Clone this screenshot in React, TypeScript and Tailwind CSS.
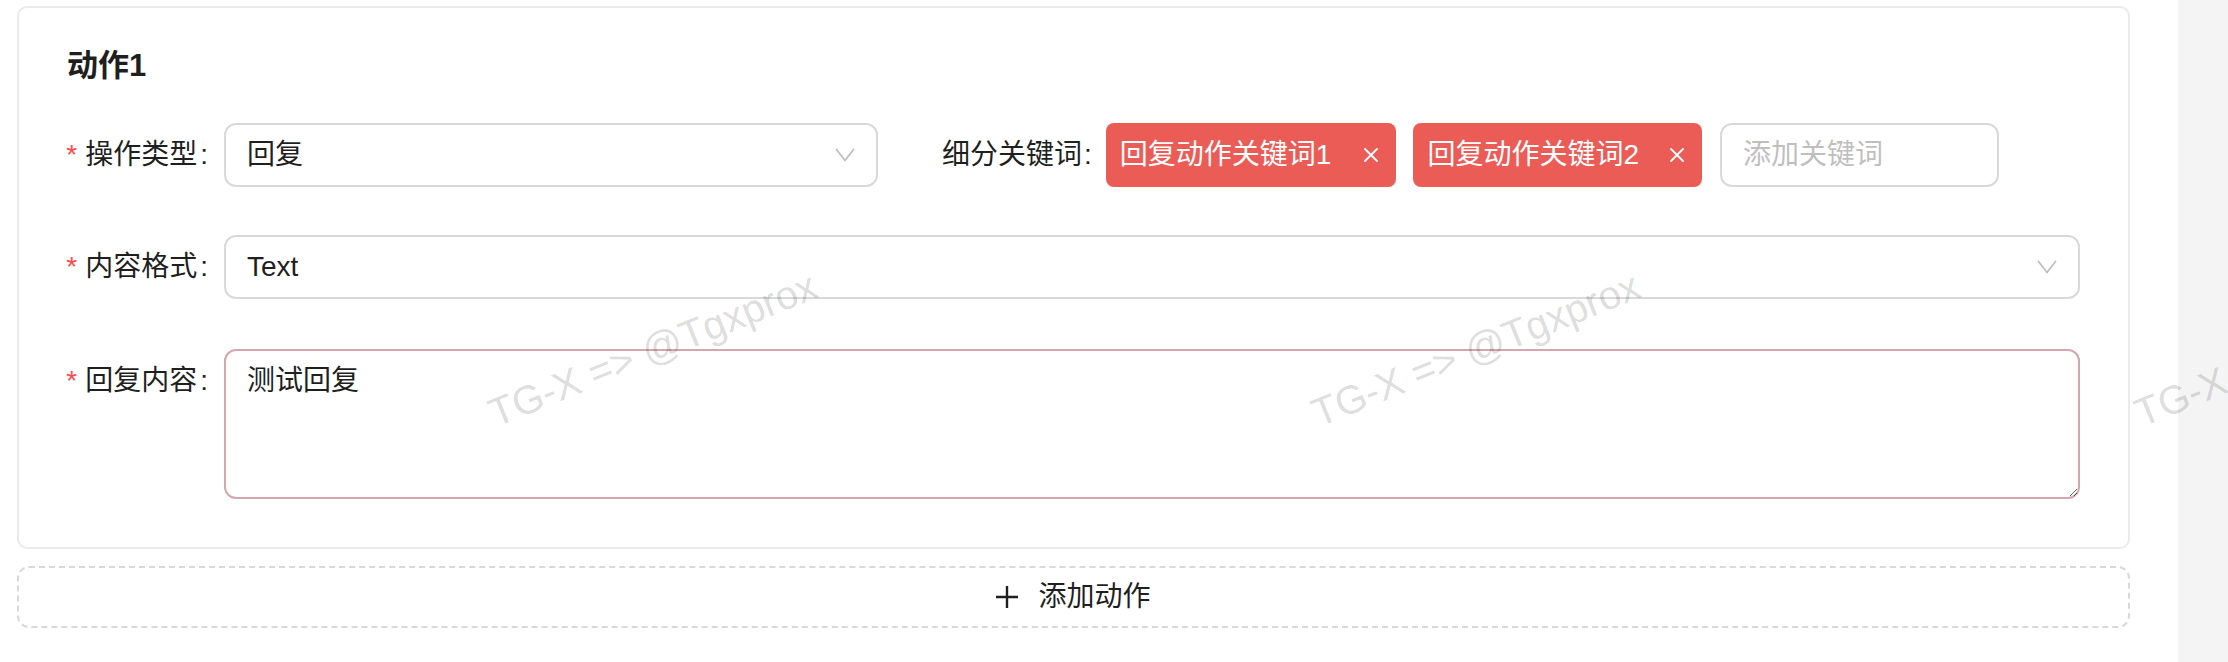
import React from "react";

const FONT = "font-['Liberation_Sans','Noto_Sans_CJK_SC',sans-serif]";

const Chevron = () => (
  <svg width="20" height="14" viewBox="0 0 20 14" fill="none" stroke="#bfbfbf" strokeWidth="1.8" strokeLinecap="round" strokeLinejoin="round">
    <polyline points="1.5,1.5 10,12.5 18.5,1.5" />
  </svg>
);

const CloseX = ({ gap }: { gap: string }) => (
  <svg className={`shrink-0 ${gap}`} width="16" height="16" viewBox="0 0 16 16" fill="none" stroke="#ffffff" strokeWidth="1.8" strokeLinecap="round">
    <path d="M2 2 L14 14 M14 2 L2 14" />
  </svg>
);

const Plus = () => (
  <svg width="22" height="22" viewBox="0 0 22 22" fill="none" stroke="#1f1f1f" strokeWidth="2.4">
    <path d="M11 0 V22 M0 11 H22" />
  </svg>
);

// 表单项左侧标签（右对齐，带必填星号）
const FieldLabel = ({ text }: { text: string }) => (
  <div className="w-[157px] shrink-0 h-[64px] flex items-center justify-end pr-[16px] whitespace-nowrap">
    <span className="text-[#ff4d4f] mr-[8px]">*</span>
    <span>{text}</span>
    <span className="ml-[3px]">:</span>
  </div>
);

const Tag = ({ text, gap }: { text: string; gap: string }) => (
  <div className="h-[64px] shrink-0 flex items-center pl-[14px] pr-[17px] rounded-[8px] bg-[#ec5c57] text-white whitespace-nowrap">
    <span>{text}</span>
    <CloseX gap={gap} />
  </div>
);

const Watermark = ({ className }: { className: string }) => (
  <span className={`absolute origin-bottom-left -rotate-[22deg] text-[40px] leading-[40px] text-black/15 whitespace-nowrap ${className}`}>
    TG-X =&gt; @Tgxprox
  </span>
);

export default function App() {
  return (
    <div className={`relative w-full h-[662px] flex bg-white text-[28px] text-[#1f1f1f] overflow-hidden ${FONT}`}>
      <div className="w-[2178px] shrink-0 pt-[6px] pl-[17px] pr-[48px]">
        <div className="border-2 border-[#ebebeb] rounded-[10px] bg-white px-[48px] pt-[38px] pb-[48px]">
          <div className="text-[31px] font-semibold leading-[40px] mb-[37px]">动作1</div>

          <div className="flex items-center">
            <FieldLabel text="操作类型" />
            <div className="w-[654px] shrink-0 h-[64px] border-2 border-[#d9d9d9] rounded-[12px] px-[21px] flex items-center justify-between">
              <span>回复</span>
              <Chevron />
            </div>
            <div className="ml-[64px] flex items-center whitespace-nowrap">
              <span>细分关键词</span>
              <span className="ml-[2px] mr-[14px]">:</span>
            </div>
            <div className="flex items-center">
              <Tag text="回复动作关键词1" gap="ml-[32px]" />
              <div className="ml-[17px]">
                <Tag text="回复动作关键词2" gap="ml-[30px]" />
              </div>
              <input
                className="ml-[18px] w-[279px] h-[64px] border-2 border-[#d9d9d9] rounded-[12px] px-[21px] outline-none placeholder:text-[#bfbfbf]"
                placeholder="添加关键词"
              />
            </div>
          </div>

          <div className="flex items-center mt-[48px]">
            <FieldLabel text="内容格式" />
            <div className="flex-1 h-[64px] border-2 border-[#d9d9d9] rounded-[12px] px-[21px] flex items-center justify-between">
              <span>Text</span>
              <Chevron />
            </div>
          </div>

          <div className="flex items-start mt-[50px]">
            <FieldLabel text="回复内容" />
            <textarea
              className="flex-1 h-[150px] border-2 border-[#d5a6ae] rounded-[12px] px-[21px] py-[8px] leading-[44px] outline-none"
              defaultValue="测试回复"
            />
          </div>
        </div>

        <button className="mt-[17px] w-full h-[62px] border-2 border-dashed border-[#d9d9d9] rounded-[12px] bg-white flex items-center justify-center">
          <Plus />
          <span className="ml-[20px]">添加动作</span>
        </button>
      </div>

      <div className="flex-1 bg-[#f4f4f4]" />

      <div className="pointer-events-none absolute inset-0">
        <Watermark className="left-[498px] top-[393px]" />
        <Watermark className="left-[1321px] top-[393px]" />
        <Watermark className="left-[2144px] top-[393px]" />
      </div>
    </div>
  );
}
